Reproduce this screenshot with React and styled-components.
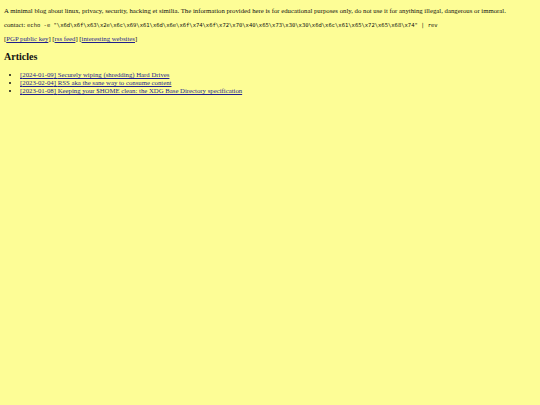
import React from 'react';
import styled, { createGlobalStyle } from 'styled-components';

const GlobalStyle = createGlobalStyle`
  html, body {
    margin: 0;
    background: #fdfd96;
  }
  body {
    font-family: "Liberation Serif", "Times New Roman", serif;
    font-size: 6.75px;
    color: #111;
  }
`;

const Page = styled.main`
  padding: 7px 4px;
`;

const Paragraph = styled.p`
  margin: 0 0 ${(p) => p.$gap ?? 6}px;
  line-height: 8px;
`;

const Code = styled.code`
  font-family: "DejaVu Sans Mono", "Liberation Mono", monospace;
  font-size: 5.5px;
`;

const Link = styled.a`
  color: #1f1f8f;
  text-decoration: underline;
`;

const Heading = styled.h2`
  font-size: 10px;
  line-height: 12px;
  font-weight: bold;
  margin: 8px 0 8px;
`;

const ArticleList = styled.ul`
  margin: 0;
  padding-left: 16px;
  line-height: 8px;
`;

const articles = [
  { date: '2024-01-09', title: 'Securely wiping (shredding) Hard Drives' },
  { date: '2023-02-04', title: 'RSS aka the sane way to consume content' },
  { date: '2023-01-08', title: 'Keeping your $HOME clean: the XDG Base Directory specification' },
];

const App = () => (
  <Page>
    <GlobalStyle />
    <Paragraph>
      A minimal blog about linux, privacy, security, hacking et similia. The information provided here is for educational purposes only, do not use it for anything illegal, dangerous or immoral.
    </Paragraph>
    <Paragraph $gap={6}>
      contact: <Code>echo -e "\x6d\x6f\x63\x2e\x6c\x69\x61\x6d\x6e\x6f\x74\x6f\x72\x70\x40\x65\x73\x30\x30\x6d\x6c\x61\x65\x72\x65\x68\x74" | rev</Code>
    </Paragraph>
    <Paragraph $gap={0}>
      [<Link href="#">PGP public key</Link>] [<Link href="#">rss feed</Link>] [<Link href="#">interesting websites</Link>]
    </Paragraph>
    <Heading>Articles</Heading>
    <ArticleList>
      {articles.map((a) => (
        <li key={a.date}>
          <Link href="#">[{a.date}] {a.title}</Link>
        </li>
      ))}
    </ArticleList>
  </Page>
);

export default App;
